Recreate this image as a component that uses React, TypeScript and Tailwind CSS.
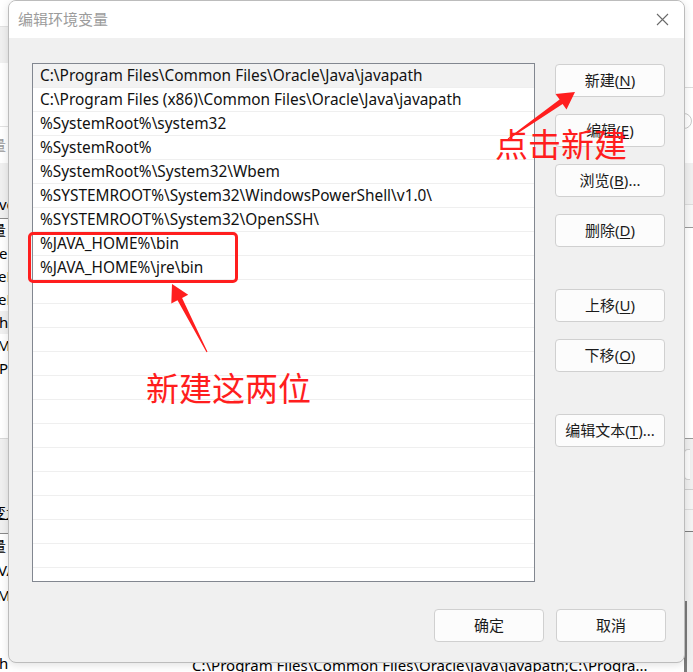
import { FunctionComponent } from "react";

const paths = [
  "C:\\Program Files\\Common Files\\Oracle\\Java\\javapath",
  "C:\\Program Files (x86)\\Common Files\\Oracle\\Java\\javapath",
  "%SystemRoot%\\system32",
  "%SystemRoot%",
  "%SystemRoot%\\System32\\Wbem",
  "%SYSTEMROOT%\\System32\\WindowsPowerShell\\v1.0\\",
  "%SYSTEMROOT%\\System32\\OpenSSH\\",
  "%JAVA_HOME%\\bin",
  "%JAVA_HOME%\\jre\\bin",
];

const rows = [...paths, ...Array(13).fill("")];

// thin-to-thick annotation arrow, tail -> tip
const arrowPoints = (tx: number, ty: number, px: number, py: number) => {
  const dx = px - tx;
  const dy = py - ty;
  const len = Math.hypot(dx, dy);
  const ux = dx / len;
  const uy = dy / len;
  const nx = -uy;
  const ny = ux;
  const bx = px - ux * 17;
  const by = py - uy * 17;
  const pt = (x: number, y: number) => `${x.toFixed(1)},${y.toFixed(1)}`;
  return [
    pt(tx + nx * 0.6, ty + ny * 0.6),
    pt(bx + nx * 2.6, by + ny * 2.6),
    pt(bx + nx * 9.5, by + ny * 9.5),
    pt(px, py),
    pt(bx - nx * 9.5, by - ny * 9.5),
    pt(bx - nx * 2.6, by - ny * 2.6),
    pt(tx - nx * 0.6, ty - ny * 0.6),
  ].join(" ");
};

const Btn: FunctionComponent<{ label: string; mn?: string; tail?: string; className?: string }> = ({
  label,
  mn,
  tail = "",
  className = "",
}) => (
  <div
    className={`h-[33px] w-[110px] shrink-0 rounded-[4px] border border-[#d0d0d0] bg-[#fcfcfc] flex items-center justify-center text-[15px] text-[#1b1b1b] ${className}`}
  >
    {label}
    {mn && (
      <>
        (<span className="underline underline-offset-2">{mn}</span>)
      </>
    )}
    {tail}
  </div>
);

const App: FunctionComponent = () => {
  return (
    <div className="relative w-[693px] h-[672px] overflow-hidden bg-white font-['Noto_Sans','Noto_Sans_CJK_SC',sans-serif] text-black">
      {/* window behind the dialog */}
      <div className="absolute inset-0 flex flex-row">
        <div className="w-[8px] flex flex-col overflow-hidden whitespace-nowrap text-[15px] leading-[23px]">
          <div className="h-[26px] shrink-0 bg-white" />
          <div className="h-[37px] shrink-0 bg-[#f0f0f0] border-t border-[#e2e2e2]" />
          <div className="h-[63px] shrink-0 bg-white" />
          <div className="h-[37px] shrink-0 bg-white border-t border-[#e2e2e2] text-[#9a9a9a] flex items-center">
            <span className="-ml-[9px]">量</span>
          </div>
          <div className="h-[55px] shrink-0 bg-[#f0f0f0] flex items-end pb-[2px]">
            <span className="-ml-[1px]">vo</span>
          </div>
          <div className="shrink-0 border-t border-[#8a8a8a]" />
          <div className="h-[23px] shrink-0"><span className="-ml-[9px]">量</span></div>
          <div className="h-[23px] shrink-0"><span className="-ml-[1px]">el</span></div>
          <div className="h-[23px] shrink-0"><span className="-ml-[2px]">eD</span></div>
          <div className="h-[23px] shrink-0"><span className="-ml-[2px]">eD</span></div>
          <div className="h-[23px] shrink-0 bg-[#f0f0f0]"><span className="-ml-[1px]">h</span></div>
          <div className="h-[23px] shrink-0"><span className="-ml-[3px]">M</span></div>
          <div className="h-[23px] shrink-0"><span className="-ml-[1px]">P</span></div>
          <div className="h-[58px] shrink-0 bg-white" />
          <div className="h-[95px] shrink-0 bg-[#f0f0f0] border-t border-[#d8d8d8] flex items-end pb-[9px] leading-[24px]">
            <span className="-ml-[9px] underline">变量</span>
          </div>
          <div className="h-[25px] shrink-0 border-t border-[#8a8a8a] bg-white leading-[25px]"><span className="-ml-[9px]">量</span></div>
          <div className="h-[25px] shrink-0 leading-[25px]"><span className="-ml-[2px]">VA</span></div>
          <div className="h-[25px] shrink-0 leading-[25px]"><span className="-ml-[3px]">M</span></div>
          <div className="flex-1 pt-[43px] leading-[24px]"><span className="-ml-[1px]">h</span></div>
        </div>
        <div className="flex-1 flex flex-col">
          <div className="flex-1" />
          <div className="h-[17px] pl-[184px] text-[15px] leading-[20px] whitespace-nowrap">
            C:\Program Files\Common Files\Oracle\Java\javapath;C:\Progra...
          </div>
        </div>
        <div className="w-[9px] flex flex-col overflow-hidden">
          <div className="h-[87px] shrink-0 bg-white" />
          <div className="h-[76px] shrink-0 bg-white border-t border-[#dcdcdc] pt-[25px]">
            <div className="h-[16px] w-[16px] -ml-[8px] rounded-full border border-[#c8c8c8]" />
          </div>
          <div className="h-[41px] shrink-0 bg-[#f0f0f0]" />
          <div className="h-[23px] shrink-0 border-t border-[#dcdcdc] bg-[#f7f7f7]" />
          <div className="h-[211px] shrink-0 border-t border-[#9a9a9a] bg-white" />
          <div className="h-[51px] shrink-0 border-t border-[#9a9a9a] bg-[#f0f0f0] pt-[10px]">
            <div className="h-[31px] w-[6px] rounded-l-[4px] border border-r-0 border-[#d0d0d0] bg-[#fbfbfb]" />
          </div>
          <div className="h-[20px] shrink-0 border-t border-[#cfcfcf] bg-[#f4f4f4]" />
          <div className="h-[22px] shrink-0 border-t border-[#dcdcdc] bg-[#f4f4f4]" />
          <div className="h-[22px] shrink-0 border-t border-[#7d7d7d] bg-[#f0f0f0]" />
          <div className="flex-1 bg-[#f0f0f0] flex flex-col">
            <div className="h-[48px]" />
            <div className="flex-1 w-[3px] bg-[#7a7a7a]" />
          </div>
        </div>
      </div>

      {/* dialog */}
      <div className="absolute left-[8px] top-0 w-[677px] h-[663px] rounded-[8px] border border-[#bcbcbc] bg-[#f0f0f0] overflow-hidden flex flex-col shadow-[0_2px_8px_rgba(0,0,0,0.12)]">
        <div className="h-[37px] shrink-0 bg-white flex items-center justify-between pl-[9px] pr-[15px]">
          <span className="text-[15px] text-[#9c9c9c]">编辑环境变量</span>
          <svg width="13" height="13" viewBox="0 0 13 13">
            <path d="M1 1L12 12M12 1L1 12" stroke="#6a6a6a" strokeWidth="1.1" />
          </svg>
        </div>
        <div className="flex-1 flex flex-col pl-[23px] pr-[18px] pt-[25px]">
          <div className="flex flex-row gap-[20px]">
            <div className="w-[503px] h-[519px] border border-[#828790] bg-white overflow-hidden flex flex-col">
              {rows.map((r, i) => (
                <div
                  key={i}
                  className={`h-[24px] shrink-0 border-b border-[#efefef] pl-[7px] pt-[1px] flex items-center text-[15.4px] whitespace-nowrap text-[#111] ${
                    i === 0 ? "bg-[#f2f2f2]" : ""
                  }`}
                >
                  {r}
                </div>
              ))}
            </div>
            <div className="flex flex-col pt-[1px]">
              <Btn label="新建" mn="N" />
              <Btn label="编辑" mn="E" className="mt-[17px]" />
              <Btn label="浏览" mn="B" tail="..." className="mt-[17px]" />
              <Btn label="删除" mn="D" className="mt-[17px]" />
              <Btn label="上移" mn="U" className="mt-[42px]" />
              <Btn label="下移" mn="O" className="mt-[17px]" />
              <Btn label="编辑文本" mn="T" tail="..." className="mt-[42px]" />
            </div>
          </div>
          <div className="mt-[27px] flex flex-row justify-end gap-[12px]">
            <Btn label="确定" />
            <Btn label="取消" />
          </div>
        </div>
      </div>

      {/* red annotations */}
      <div className="absolute left-[28px] top-[232px] w-[210px] h-[51px] rounded-[5px] border-[3px] border-[#ff1e1e]" />
      <svg className="absolute inset-0 pointer-events-none" width="693" height="672">
        <polygon points={arrowPoints(207, 352, 172, 284)} fill="#ff1e1e" />
        <polygon points={arrowPoints(508, 139, 575, 92)} fill="#ff1e1e" />
      </svg>
      <div className="absolute left-[495px] top-[127px] text-[33px] leading-none text-[#ff1e1e] font-['Noto_Sans_CJK_SC',sans-serif] whitespace-nowrap">
        点击新建
      </div>
      <div className="absolute left-[146px] top-[371px] text-[33px] leading-none text-[#ff1e1e] font-['Noto_Sans_CJK_SC',sans-serif] whitespace-nowrap">
        新建这两位
      </div>
    </div>
  );
};

export default App;
